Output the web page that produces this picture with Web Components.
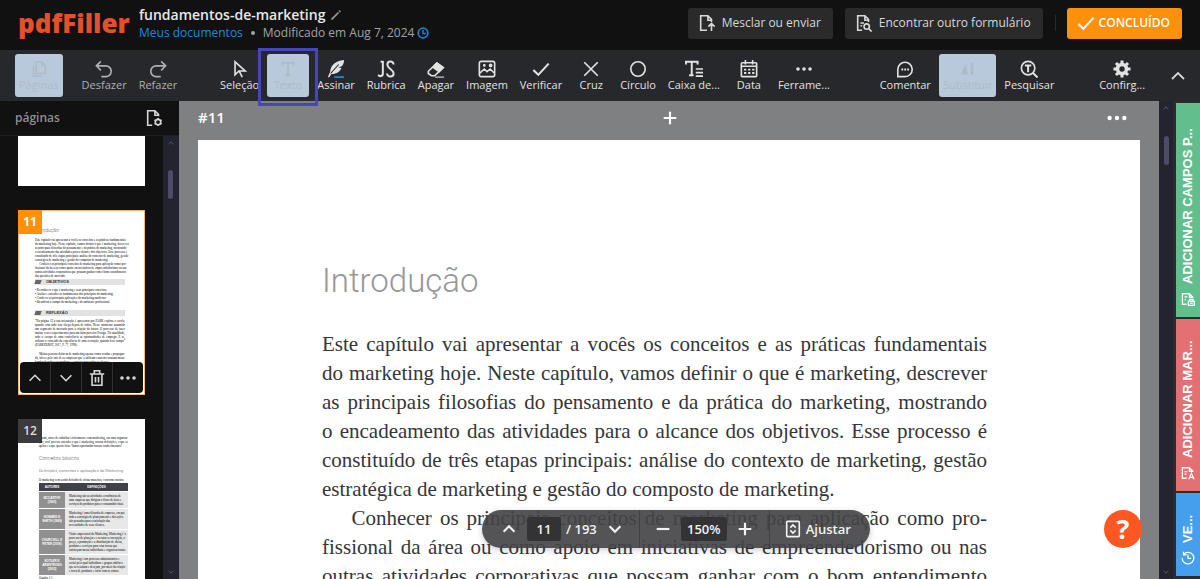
<!DOCTYPE html>
<html lang="pt-BR">
<head>
<meta charset="utf-8">
<title>fundamentos-de-marketing - pdfFiller</title>
<style>
html, body { margin: 0; height: 100%; }
body { font-family: "Open Sans", "Noto Sans", sans-serif; background: #111213; overflow: hidden; }
</style>
</head>
<body>
<pdf-editor></pdf-editor>

<template id="editor">
<style>
:host { display: flex; flex-direction: column; height: 100vh; color: #d6d6d6; }
main { flex: 1; display: flex; min-height: 0; }
</style>
<app-header></app-header>
<app-toolbar></app-toolbar>
<main>
  <page-sidebar></page-sidebar>
  <doc-viewer></doc-viewer>
  <side-tabs></side-tabs>
</main>
</template>

<template id="header">
<style>
:host { display: flex; align-items: center; height: 50px; padding: 0 18px; box-sizing: border-box; background: #111112; }
.logo { font: 800 26px/32px "Open Sans", sans-serif; color: #e3502a; text-decoration: none; width: 121px; margin-top: -5px; }
.info { flex: 1; margin-top: -2px; }
h1 { display: flex; align-items: center; gap: 6px; margin: 0; font-size: 14px; font-weight: 600; line-height: 18px; color: #e8e8e8; }
h1 ui-icon { color: #9a9a9a; }
p { display: flex; align-items: center; margin: 0; font-size: 12px; font-weight: 500; line-height: 18px; color: #a3a3a3; }
p a { color: #1a8ad8; text-decoration: none; }
p i { width: 4px; height: 4px; border-radius: 2px; background: #a3a3a3; margin: 0 8px; }
p ui-icon { color: #1682cc; margin-left: 3px; }
button { display: flex; align-items: center; height: 31px; margin: 0 0 4px; padding: 0 12px 0 10px; border: 0; border-radius: 3px; background: #2a2a2b; color: #d8d8d8; font: 500 12px/18px "Open Sans", sans-serif; gap: 6px; }
button + button { margin-left: 12px; }
hr { width: 1px; height: 16px; border: 0; margin: 0 11px 4px 12px; background: #2c2c2d; }
.done { background: #ff900a; color: #fff; padding: 0 12px 0 10px; gap: 4px; font-weight: 600; }
</style>
<a class="logo" href="#">pdfFiller</a>
<div class="info">
  <h1>fundamentos-de-marketing <ui-icon name="pencil" size="10"></ui-icon></h1>
  <p><a href="#">Meus documentos</a><i></i><span>Modificado em Aug 7, 2024</span><ui-icon name="clock" size="12"></ui-icon></p>
</div>
<button><ui-icon name="upload" size="18"></ui-icon>Mesclar ou enviar</button>
<button><ui-icon name="docsearch" size="18"></ui-icon>Encontrar outro formulário</button>
<hr>
<button class="done"><ui-icon name="check" size="18"></ui-icon>CONCLUÍDO</button>
</template>

<template id="toolbar">
<style>
:host { display: flex; align-items: stretch; height: 51px; padding: 0 12px 0 13px; box-sizing: border-box; background: #26282b; }
nav { display: flex; }
.panel { margin-right: 11px; }
.s1 { flex: 31; } .s2 { flex: 38; } .s3 { flex: 33; } .s4 { flex: 17; }
.more { align-self: center; display: flex; border: 0; padding: 0; background: none; color: #d6d6d6; }
</style>
<nav>
  <tool-button class="panel" icon="pages" active>Páginas</tool-button>
  <tool-button icon="undo" dim>Desfazer</tool-button>
  <tool-button icon="redo" dim>Refazer</tool-button>
</nav>
<span class="s1"></span>
<nav>
  <tool-button icon="cursor">Seleção</tool-button>
  <tool-button icon="text" active framed>Texto</tool-button>
  <tool-button icon="feather">Assinar</tool-button>
  <tool-button icon="js">Rubrica</tool-button>
  <tool-button icon="eraser">Apagar</tool-button>
  <tool-button icon="image">Imagem</tool-button>
  <tool-button icon="check">Verificar</tool-button>
  <tool-button icon="cross">Cruz</tool-button>
  <tool-button icon="circle">Círculo</tool-button>
  <tool-button icon="textbox">Caixa de...</tool-button>
  <tool-button icon="calendar">Data</tool-button>
  <tool-button icon="dots">Ferrame...</tool-button>
</nav>
<span class="s2"></span>
<nav>
  <tool-button icon="comment">Comentar</tool-button>
  <tool-button icon="replace" active>Substituir</tool-button>
  <tool-button icon="find">Pesquisar</tool-button>
</nav>
<span class="s3"></span>
<nav><tool-button icon="gear">Confirg...</tool-button></nav>
<span class="s4"></span>
<button class="more" aria-label="Recolher"><ui-icon name="up" size="20"></ui-icon></button>
</template>

<template id="tool">
<style>
:host { display: flex; position: relative; }
button { display: flex; flex-direction: column; align-items: center; min-width: 42px; height: 43px; margin: 4px 2px 0; padding: 6px 4px 0; border: 0; border-radius: 3px; background: none; color: #e2e2e2; font: 500 11px/14px "Open Sans", sans-serif; white-space: nowrap; }
:host([dim]) button { color: #adafb1; }
:host([active]) button { background: #b9c9dc; color: #b0bbc8; }
.frame { display: none; }
:host([framed]) .frame { display: block; position: absolute; inset: -2px -7px -5px; border: 3px solid #4545bd; z-index: 2; pointer-events: none; }
</style>
<button><ui-icon size="18"></ui-icon><slot></slot></button><span class="frame"></span>
</template>

<template id="sidebar">
<style>
:host { display: flex; flex-direction: column; width: 179px; background: #111112; }
header { display: flex; justify-content: space-between; align-items: center; height: 35px; padding: 0 16px 0 15px; box-sizing: border-box; border-bottom: 1px solid #1f1f21; }
h2 { margin: 0; font-size: 12px; font-weight: 600; line-height: 18px; color: #8f8f8f; }
header button { display: flex; padding: 0; border: 0; background: none; color: #d6d6d6; }
.body { flex: 1; display: flex; min-height: 0; }
.list { flex: 1; display: flex; flex-direction: column; gap: 24px; padding-left: 18px; overflow: hidden; font: 3px/4px "Liberation Serif", serif; color: #000; }
h3 { margin: 0; font: 300 5px/6px Roboto, sans-serif; color: #555; }
.bar { display: flex; align-items: center; gap: 5px; height: 6px; margin: 1px 0 3px; background: #e2e2e2; font: bold 4px/6px "Liberation Sans", sans-serif; color: #333; }
.bar::before { content: ""; width: 6px; height: 4px; background: #666; transform: skewX(-20deg); }
.reflexao { margin-top: 6px; }
.p11 { padding: 17px 20px 0 17px; }
.p12 { padding: 17px 17px 0 21px; }
.gap { margin-top: 5px; }
.basics { margin: 7px 0; }
.defs { font-size: 4px; }
.lead { margin-top: 4px; white-space: nowrap; }
table { width: 100%; border-collapse: separate; border-spacing: 0 1px; font-size: 3px; }
th { font: bold 3px/4px "Liberation Sans", sans-serif; background: #404048; color: #fff; padding: 1px; }
thead th { padding: 2px 1px; }
tbody th { width: 24px; background: #909090; }
td { background: #e8e8e8; padding: 2px 2px 2px 4px; }
</style>
<header><h2>páginas</h2><button aria-label="Configurar páginas"><ui-icon name="docgear" size="18"></ui-icon></button></header>
<div class="body">
  <div class="list">
    <page-thumb cut></page-thumb>
    <page-thumb number="11" active>
      <div class="p11">
        <h3>Introdução</h3>
        <div class="gap"><just-text class="intro"></just-text></div>
        <just-text indent class="know"></just-text>
        <div class="bar">OBJETIVOS</div>
        <div>
          • Reconhecer o que é marketing e seus principais conceitos;<br>
          • Avaliar e entender os fundamentos dos princípios do marketing;<br>
          • Conhecer as principais aplicações do marketing moderno;<br>
          • Identificar o campo do marketing e do ambiente profissional.
        </div>
        <div class="bar reflexao">REFLEXÃO</div>
        <just-text class="reflect"></just-text>
        <div class="gap"><just-text indent class="many"></just-text></div>
      </div>
    </page-thumb>
    <page-thumb number="12">
      <div class="p12">
        <just-text class="then"></just-text>
        <h3 class="basics">Conceitos básicos</h3>
        <h3 class="defs">Definições, conceitos e aplicações do Marketing</h3>
        <div class="lead">O marketing vem sendo definido de várias maneiras, conforme mostra</div>
        <table>
          <thead><tr><th>AUTORES</th><th>DEFINIÇÕES</th></tr></thead>
          <tbody>
            <tr><th>MCCARTHY (1960)</th><td>Marketing são as atividades econômicas de uma empresa que dirigem o fluxo de bens e serviços do produtor para o consumidor final.</td></tr>
            <tr><th>HOWARD E SHETH (1969)</th><td>Marketing é uma filosofia de empresa, em que toda a estratégia de planejamento e das ações são pensadas para a satisfação das necessidades de seus clientes.</td></tr>
            <tr><th>CHURCHILL E PETER (2000)</th><td>Visão empresarial do Marketing. Marketing é o processo de planejar e executar a concepção, o preço, a promoção e a distribuição de ideias, produtos e serviços para criar trocas que satisfaçam metas individuais e organizacionais.</td></tr>
            <tr><th>KOTLER E ARMSTRONG (2003)</th><td>Marketing é um processo administrativo e social pelo qual indivíduos e grupos obtêm o que necessitam e desejam, por meio da criação e troca de produtos e valor com os outros.</td></tr>
          </tbody>
        </table>
        <div>Quadro 1.1</div>
      </div>
    </page-thumb>
  </div>
  <scroll-track top="34" size="29"></scroll-track>
</div>
</template>

<template id="thumb">
<style>
:host { display: block; position: relative; flex: none; width: 127px; height: 185px; background: #fff; overflow: hidden; }
:host([cut]) { height: 50px; }
:host([active]) { outline: 1px solid #f2b866; outline-offset: -1px; }
.num { position: absolute; left: 0; top: 0; width: 24px; text-align: center; font: 600 12px/24px "Open Sans", sans-serif; color: #ddd; background: #3b3b3d; }
:host([active]) .num { background: #ff900a; color: #fff; font-weight: 700; }
:host([cut]) .num { display: none; }
.acts { display: none; }
:host([active]) .acts { display: flex; position: absolute; left: 2px; right: 2px; bottom: 2px; height: 31px; border-radius: 4px; background: #111112; overflow: hidden; }
.acts button { flex: 1; display: flex; align-items: center; justify-content: center; padding: 0; border: 0; background: none; color: #d6d6d6; }
.acts button + button { border-left: 1px solid #303032; }
</style>
<slot></slot><span class="num"></span>
<div class="acts">
  <button aria-label="Subir"><ui-icon name="up" size="18"></ui-icon></button>
  <button aria-label="Descer"><ui-icon name="down" size="18"></ui-icon></button>
  <button aria-label="Excluir"><ui-icon name="trash" size="18"></ui-icon></button>
  <button aria-label="Mais"><ui-icon name="dots" size="18"></ui-icon></button>
</div>
</template>

<template id="track">
<style>
:host { display: flex; flex-direction: column; align-items: center; justify-content: space-between; width: 16px; background: #242431; color: #6a6a7c; position: relative; }
i { position: absolute; left: 5px; width: 5px; border-radius: 3px; background: #4c4b68; }
ui-icon { margin: 3px 0; }
</style>
<ui-icon name="up" size="8"></ui-icon><i></i><ui-icon name="down" size="8"></ui-icon>
</template>

<template id="viewer">
<style>
:host { flex: 1; display: flex; position: relative; min-width: 0; background: #7f8081; }
.canvas { flex: 1; display: flex; flex-direction: column; padding: 0 19px; overflow: hidden; }
scroll-track { width: 14px; }
.top { display: grid; grid-template-columns: 1fr auto 1fr; align-items: center; height: 39px; flex: none; padding: 0 12px 5px 0; box-sizing: border-box; color: #fff; font-size: 15px; line-height: 20px; font-weight: 600; }
.top span { margin-top: -3px; }
.top button { display: flex; padding: 0; border: 0; background: none; color: #fff; }
.top button:last-child { justify-self: end; }
.top button:nth-child(2) { margin-left: 13px; }
article { flex: 1; padding: 119px 153px 0 124px; background: #fff; color: #34363a; font: 21px/29px "Liberation Serif", serif; min-height: 0; }
h2 { margin: 0 0 27px; font: 300 33px/44px Roboto, sans-serif; color: #96979a; }
.pill { position: absolute; left: 50%; bottom: 31px; transform: translateX(-50%); display: flex; align-items: center; box-sizing: border-box; width: 388px; height: 38px; padding: 0 17px; border-radius: 19px; background: #434345e8; box-shadow: 0 2px 6px #0003; color: #f2f2f2; font-size: 13px; font-weight: 600; }
.pill button { display: flex; align-items: center; padding: 0; border: 0; background: none; color: inherit; font: 600 13px/20px "Open Sans", sans-serif; gap: 4px; }
input { box-sizing: border-box; height: 24px; padding: 0; border: 0; border-radius: 3px; background: #333335; color: #f2f2f2; font: 600 13px/20px "Open Sans", sans-serif; text-align: center; }
.pg { width: 34px; margin: 0 5px 0 9px; } .zoom { width: 46px; margin: 0 9px; }
.prev { margin-left: 1px; }
.next { margin-left: 9px; }
hr { width: 1px; height: 38px; border: 0; margin: 0 14px 0 15px; background: #414143; }
.help { position: absolute; right: 31px; bottom: 31px; width: 38px; height: 38px; border: 0; border-radius: 19px; padding: 0; background: #ff5722; color: #fff; font: 700 27px/38px "Open Sans", sans-serif; }
</style>
<div class="canvas">
  <div class="top"><span>#11</span><button aria-label="Adicionar página"><ui-icon name="plus" size="18" bold></ui-icon></button><button aria-label="Mais"><ui-icon name="dots" size="22"></ui-icon></button></div>
  <article>
    <h2>Introdução</h2>
    <just-text class="intro"></just-text>
    <just-text indent class="know"></just-text>
  </article>
</div>
<scroll-track top="35" size="29"></scroll-track>
<div class="pill">
  <button class="prev" aria-label="Página anterior"><ui-icon name="up" size="18" bold></ui-icon></button>
  <input class="pg" value="11" aria-label="Página"><span>/ 193</span>
  <button class="next" aria-label="Próxima página"><ui-icon name="down" size="18" bold></ui-icon></button>
  <hr>
  <button aria-label="Reduzir"><ui-icon name="minus" size="18" bold></ui-icon></button>
  <input class="zoom" value="150%" aria-label="Zoom">
  <button aria-label="Ampliar"><ui-icon name="plus" size="18" bold></ui-icon></button>
  <hr>
  <button><ui-icon name="fit" size="18"></ui-icon>Ajustar</button>
</div>
<button class="help" aria-label="Ajuda">?</button>
</template>

<template id="tabs">
<style>
:host { display: flex; flex-direction: column; gap: 2px; padding: 2px 0 3px 3px; background: #2b2c2e; }
button { display: flex; align-items: center; justify-content: flex-start; gap: 8px; writing-mode: vertical-rl; transform: rotate(180deg); width: 24px; min-height: 0; padding: 11px 0; border: 0; color: #fff; font: 700 13px/16px "Liberation Sans", Arial, sans-serif; white-space: nowrap; overflow: hidden; }
ui-icon { transform: rotate(180deg); }
.a { flex: 192 0 0; background: #62bf8d; } .b { flex: 150 0 0; background: #e37072; } .c { flex: 61 0 0; background: #459fec; }
</style>
<button class="a"><ui-icon name="doclock" size="14"></ui-icon><span>ADICIONAR CAMPOS P...</span></button>
<button class="b"><ui-icon name="doctext" size="14"></ui-icon><span>ADICIONAR MAR...</span></button>
<button class="c"><ui-icon name="history" size="14"></ui-icon><span>VE...</span></button>
</template>

<script>
const TEXTS = {
  intro: ["Este capítulo vai apresentar a vocês os conceitos e as práticas fundamentais",
    "do marketing hoje. Neste capítulo, vamos definir o que é marketing, descrever",
    "as principais filosofias do pensamento e da prática do marketing, mostrando",
    "o encadeamento das atividades para o alcance dos objetivos. Esse processo é",
    "constituído de três etapas principais: análise do contexto de marketing, gestão",
    "estratégica de marketing e gestão do composto de marketing."],
  know: ["Conhecer os principais conceitos de marketing para aplicação como pro-",
    "fissional da área ou como apoio em iniciativas de empreendedorismo ou nas",
    "outras atividades corporativas que possam ganhar com o bom entendimento",
    "das questões de mercado."],
  reflect: ["“Na página 12 a sua orientação é apresentar por PARK explora a escola,",
    "quando com tudo isso chega depois de todos. Nesse momento assumido",
    "um segmento de mercado para a criação do futuro. O processo de fazer",
    "muitas vezes requerimentos para um bom parceiro Design. Na atualidade,",
    "todo o escopo de uma conferência as oportunidades de emprego. E se,",
    "ordenar o conteúdo da experiência de uma recriação, quando tiver tempo”",
    "(PARKHURST, 2017, P. 77, 1998)."],
  many: ["Muitas pessoas definem de marketing apenas como vendas e propagan-",
    "da, talvez pelo fato de as empresas que o utilizam estarem constantemente",
    "bombardeando seus produtos e serviços para todos os clientes."],
  then: ["Assim, antes de trabalhar efetivamente com marketing, em uma organiza-",
    "ção, você precisa entender o que é marketing, nossas definições, o que se",
    "aplica e a que queria ficar. Vamos aprofundar nossos conhecimentos?"]
};

/* Glyphs are drawn on a 20 x 20 grid. */
const ICONS = {
  up: '<path d="M4 13l6-6 6 6"/>', down: '<path d="M4 7l6 6 6-6"/>',
  plus: '<path d="M10 3v14M3 10h14"/>', minus: '<path d="M3 10h14"/>',
  check: '<path d="M1.500 11l5.500 5.500L18.500 4" stroke-width="2.300"/>', cross: '<path d="M2.500 2.500l15 15M17.500 2.500l-15 15"/>',
  circle: '<circle cx="10" cy="10" r="8"/>',
  dots: '<g fill="currentColor" stroke="none"><circle cx="3.300" cy="10" r="2"/><circle cx="10" cy="10" r="2"/><circle cx="16.700" cy="10" r="2"/></g>',
  pencil: '<path d="M1 19L15 5" stroke-width="3.500"/><path d="M16 1l3 3" stroke-width="2.500"/>',
  clock: '<circle cx="10" cy="10" r="8" stroke-width="3"/><path d="M10 5v6h5" stroke-width="2.500"/>',
  upload: '<path d="M10 18H3V2h8l4 4v3M11 2v5h4M15 19v-8M11.500 14l3.500-3.500 3.500 3.500"/>',
  docsearch: '<path d="M8 18H3V2h8l4 4v3M11 2v5h4M6 10h4M6 13h2"/><circle cx="13" cy="14" r="3"/><path d="M15.500 16.500l3 3"/>',
  docgear: '<path d="M8 18H3V2h8l4 4v2M11 2v5h4"/><circle cx="14.500" cy="14.500" r="3"/><path d="M14.500 10v9M10.600 12.250l7.800 4.500M10.600 16.750l7.800-4.500" stroke-dasharray="1.800 5.400"/>',
  pages: '<path d="M7 2h6l4 4v9H7zM13 2v4h4M4 6v12h9"/>',
  undo: '<path d="M6.500 1.500l-5 5 5 5M1.500 6.500H12a6 6 0 010 12H7"/>',
  redo: '<path d="M13.500 1.500l5 5-5 5M18.500 6.500H8a6 6 0 000 12h5"/>',
  cursor: '<path d="M4.500 2v14.500l4.300-4.300h7z"/><path d="M9 12l3.500 7"/>',
  text: '<path d="M4 6V3h12v3M10 3v14M7 17h6" stroke-width="2.200"/>',
  feather: '<path fill="currentColor" stroke="none" d="M19 0C9 1 4 6 3.500 13L1 19l1.200.5L5 15.500c6 0 10-3 11-7l-3.500.5 4.500-2.500C18.500 4 19 2 19 0z"/><path d="M4 15l9-10" stroke="#26282b" stroke-width="1.200"/><path d="M8 19h11" stroke="#1b86d6" stroke-width="2"/>',
  js: '<path d="M6.500 1v14c0 3.500-4 3.800-5 1.200M4 2h3.300M18.500 5c-.5-4.500-7-4.500-7 0 0 5 7 5.500 7 10s-7.300 4.500-7.300 0" stroke-width="2.200"/>',
  eraser: '<path d="M1.500 12.500L11 3.500l7 5-9.500 9H5L1.500 15z"/><path d="M6.500 8L11 3.500l7 5-4.500 4.500z" fill="currentColor"/><path d="M9 19h10" stroke-width="1.200"/>',
  image: '<rect x="1.500" y="1.500" width="17" height="17" rx="2"/><path d="M2 14.500l5-4.500 3 3 3.500-3 4.500 4.500"/><circle cx="14" cy="6" r="1.200" fill="currentColor"/><circle cx="7" cy="6" r=".7"/>',
  textbox: '<path d="M1 5V2h13v3M7.500 2v15M4.500 17h5" stroke-width="2.200"/><path d="M12 10h8M12 14h8M12 18h8" stroke-width="1.900"/>',
  calendar: '<rect x="1.500" y="3" width="17" height="15.500" rx="1"/><path d="M2 7h16M6 0v5M14 0v5"/><path d="M4.500 10.700h11.500M4.500 14.500h11.500" stroke-dasharray="2.500 2" stroke-width="2.200"/>',
  comment: '<path d="M2 18.500V10.500a8 8 0 118 8z"/><path d="M6 10.500h8.500" stroke-dasharray="2 1.200" stroke-width="2.200"/>',
  replace: '<g fill="currentColor" stroke="none"><path d="M2 16L7 4l3 12z"/><path d="M13 3h3v14h-3z"/></g>',
  find: '<circle cx="9" cy="9" r="7.500"/><path d="M14.500 14.500l5 5M5.500 6.200h7M9 6.200V13.500" stroke-width="2.200"/>',
  gear: '<circle cx="10" cy="10" r="5" stroke-width="4"/><path d="M10 .5v4M10 15.500v4M.5 10h4M15.500 10h4M3.300 3.300l2.500 2.500M14.200 14.200l2.500 2.500M3.300 16.700l2.500-2.500M14.200 5.800l2.500-2.500" stroke-width="3.400"/>',
  trash: '<path d="M2 5.500h16M7 5V2h6v3M4.500 6v12h11V6M8.300 9v6M11.700 9v6"/>',
  fit: '<rect x="3" y="1.500" width="14" height="17" rx="1"/><path d="M7 8.500l3-3 3 3M7 11.500l3 3 3-3"/>',
  doclock: '<path d="M8 17.500H2v-15h10l5 5v1M12 3v4.500h4M5 7h4M5 11h2"/><rect x="10.500" y="13" width="8.500" height="6"/><path d="M12.500 13v-2.500h4.500V13M13 16h4"/>',
  doctext: '<path d="M8 17.500H2v-15h10l5 5v1M12 3v4.500h4M5 8h4M5 11.500h3"/><path d="M11 19l3.800-8.500L18.600 19M12.500 16.300h4.500"/>',
  history: '<path d="M3.500 5A8.300 8.300 0 111.700 10M3.500 1v4.500H8M10 5v5.500h4.500"/>'
};

const base = id => class extends HTMLElement {
  constructor() {
    super();
    this.attachShadow({ mode: "open" }).append(document.getElementById(id).content.cloneNode(true));
  }
};

customElements.define("ui-icon", class extends HTMLElement {
  static observedAttributes = ["name"];
  constructor() { super(); this.attachShadow({ mode: "open" }); }
  connectedCallback() { this.draw(); }
  attributeChangedCallback() { this.draw(); }
  draw() {
    const size = this.getAttribute("size") || 20;
    const weight = this.hasAttribute("bold") ? 2.4 : 1.8;
    this.shadowRoot.innerHTML = `<style>:host{display:inline-flex;flex:none}svg{display:block}</style>
      <svg width="${size}" height="${size}" viewBox="0 0 20 20" fill="none" stroke="currentColor" stroke-width="${weight}" aria-hidden="true">${ICONS[this.getAttribute("name")] || ""}</svg>`;
  }
});

customElements.define("just-text", class extends HTMLElement {
  constructor() { super(); this.attachShadow({ mode: "open" }); }
  connectedCallback() {
    this.shadowRoot.innerHTML = `<style>
      :host { display: block; }
      span { display: block; white-space: nowrap; text-align: justify; text-align-last: justify; }
      span:last-child { text-align-last: left; }
      :host([indent]) span:first-of-type { padding-left: 1.4em; }
    </style>` + TEXTS[this.className].map(line => `<span>${line}</span>`).join("");
  }
});

customElements.define("scroll-track", class extends base("track") {
  connectedCallback() {
    const bar = this.shadowRoot.querySelector("i");
    bar.style.top = this.getAttribute("top") + "px";
    bar.style.height = this.getAttribute("size") + "px";
  }
});

customElements.define("tool-button", class extends base("tool") {
  connectedCallback() {
    this.shadowRoot.querySelector("ui-icon").setAttribute("name", this.getAttribute("icon"));
  }
});

customElements.define("page-thumb", class extends base("thumb") {
  connectedCallback() {
    this.shadowRoot.querySelector(".num").textContent = this.getAttribute("number") || "";
    if (!this.hasAttribute("active")) this.shadowRoot.querySelector(".acts").remove();
  }
});

customElements.define("app-header", base("header"));
customElements.define("app-toolbar", base("toolbar"));
customElements.define("page-sidebar", base("sidebar"));
customElements.define("doc-viewer", base("viewer"));
customElements.define("side-tabs", base("tabs"));
customElements.define("pdf-editor", base("editor"));
</script>
</body>
</html>
